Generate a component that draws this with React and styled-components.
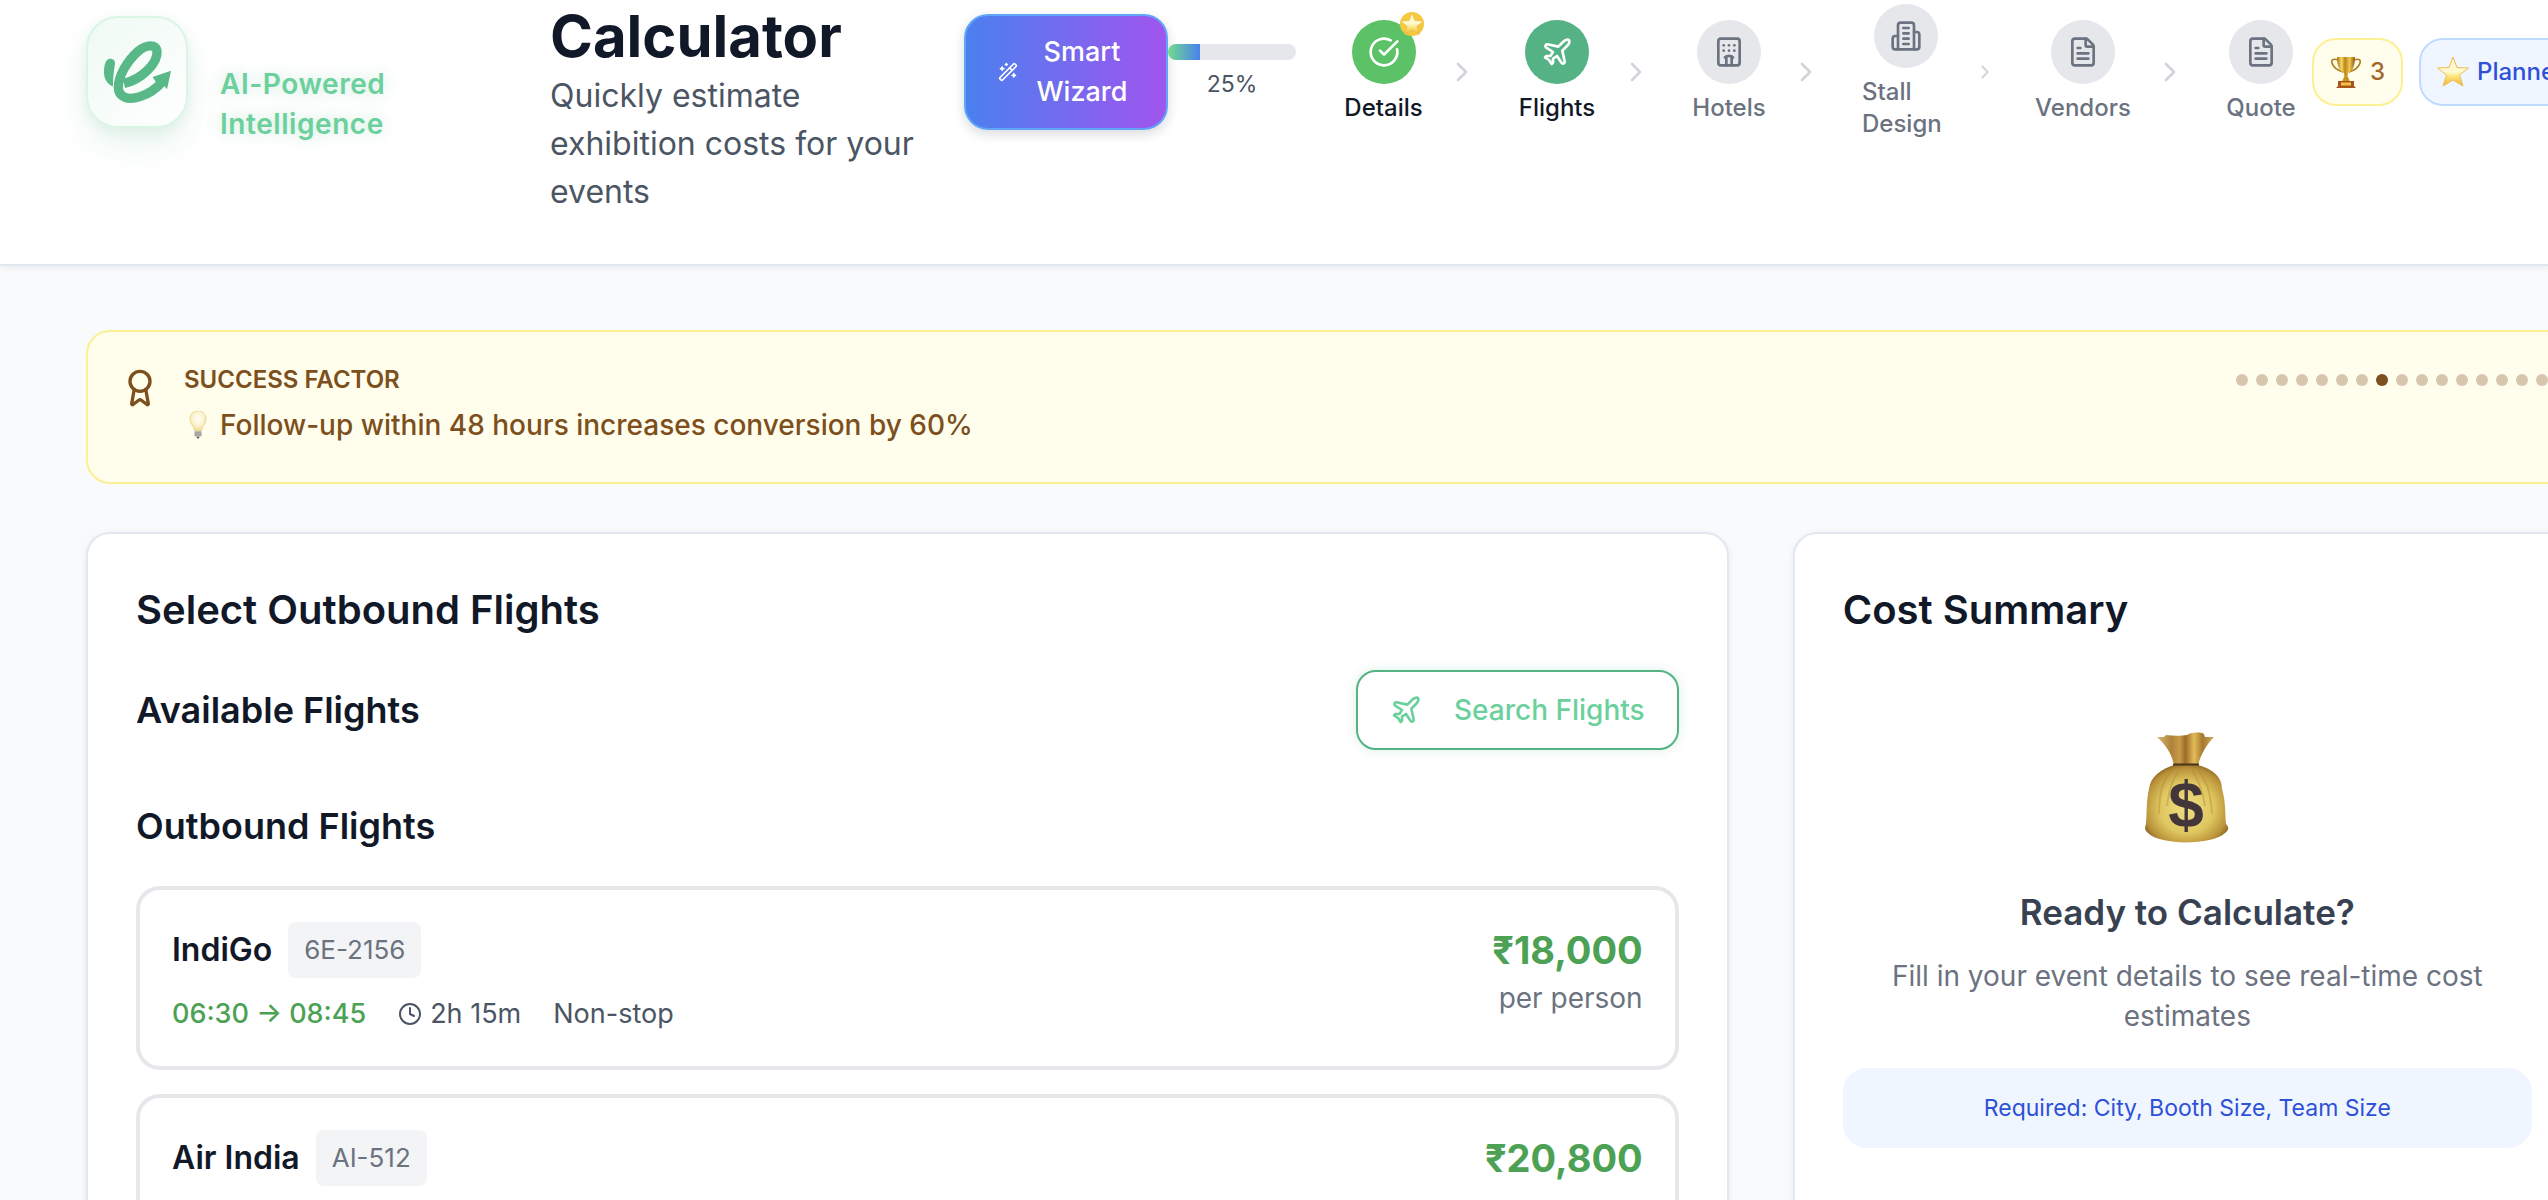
import React from "react";
import styled, { createGlobalStyle, css } from "styled-components";
import {
  Award,
  ChevronRight,
  CircleCheckBig,
  Clock,
  FileText,
  Hotel,
  Plane,
  WandSparkles,
} from "lucide-react";

const GlobalStyle = createGlobalStyle`
  *, *::before, *::after { box-sizing: border-box; }
  body { margin: 0; background: #f8fafc; }
  h1, h2, h3, h4, p, ul { margin: 0; padding: 0; }
  ul { list-style: none; }
  button { font: inherit; cursor: pointer; }
  svg { display: block; }
`;

const Page = styled.div`
  height: 100vh;
  overflow: hidden;
  background: #f8fafc;
  color: #111827;
  font-family: Inter, "Liberation Sans", sans-serif;
`;

/* ---------- header ---------- */

const Header = styled.header`
  display: flex;
  align-items: flex-start;
  padding: 0 0 48px 86px;
  background: #ffffff;
  border-bottom: 2px solid #e2e8f0;
  box-shadow: 0 2px 6px rgba(15, 23, 42, 0.06);
`;

const HeaderGroup = styled.div`
  display: flex;
  align-items: center;
  flex-shrink: 0;
  height: 144px;
  gap: ${(p) => p.$gap || 0}px;
`;

const LogoTile = styled.div`
  width: 102px;
  height: 112px;
  border: 2px solid #d9f6e5;
  border-radius: 32px;
  background: linear-gradient(135deg, #effaf4, #ffffff);
  box-shadow: 0 16px 32px rgba(84, 178, 132, 0.14), 0 4px 12px rgba(84, 178, 132, 0.1);
  overflow: hidden;
`;

const Tagline = styled.p`
  align-self: flex-end;
  width: 330px;
  padding-right: 128px;
  color: #6bd09c;
  font-size: 28px;
  font-weight: 600;
  line-height: 40px;
  letter-spacing: 0.02em;
  text-shadow: 0 0 16px rgba(84, 178, 132, 0.3);
`;

const TitleBlock = styled.div`
  flex-shrink: 0;
  width: 414px;
`;

const Title = styled.h1`
  font-size: 58px;
  font-weight: 700;
  line-height: 72px;
`;

const Subtitle = styled.p`
  padding-right: 32px;
  color: #4b5563;
  font-size: 32px;
  line-height: 48px;
`;

const WizardButton = styled.button`
  display: flex;
  align-items: center;
  justify-content: space-between;
  width: 204px;
  height: 116px;
  padding: 0 32px;
  border: 2px solid #60a5fa;
  border-radius: 24px;
  background: linear-gradient(90deg, #4b80ee, #a055ee);
  box-shadow: 0 4px 12px rgba(15, 23, 42, 0.16);
  color: #ffffff;
  font-size: 27px;
  font-weight: 500;
  line-height: 40px;
  text-align: center;
`;

const WizardLabel = styled.span`
  width: 104px;
`;

const Progress = styled.div`
  display: flex;
  flex-direction: column;
  gap: 8px;
  width: 128px;
  margin-right: 33px;
`;

const ProgressTrack = styled.div`
  height: 16px;
  border-radius: 8px;
  background: #e5e7eb;
  overflow: hidden;
`;

const ProgressFill = styled.div`
  height: 100%;
  background: linear-gradient(90deg, #6fdc8c, #4b80ee);
`;

const ProgressText = styled.span`
  color: #4b5563;
  font-size: 23px;
  line-height: 32px;
  text-align: center;
`;

const StepButton = styled.button`
  display: flex;
  flex-direction: column;
  align-items: center;
  gap: 8px;
  width: ${(p) => p.$width}px;
  padding: 0 16px;
  border: 0;
  background: none;
  color: ${(p) => (p.$reached ? "#111827" : "#6b7280")};
  font-size: 24px;
  font-weight: 500;
  line-height: 32px;
  text-align: left;
`;

const StepCircle = styled.span`
  position: relative;
  display: flex;
  align-items: center;
  justify-content: center;
  width: 64px;
  height: 64px;
  border-radius: 50%;
  ${(p) =>
    ({
      done: css`background: #5cc267; color: #ffffff;`,
      current: css`background: #54b284; color: #ffffff;`,
      todo: css`background: #e5e7eb; color: #6b7280;`,
    })[p.$state]}
`;

const StepLabel = styled.span`
  display: flex;
  justify-content: center;
  width: 100%;
`;

const StarBadge = styled.span`
  position: absolute;
  top: -8px;
  right: -8px;
  display: flex;
  align-items: center;
  justify-content: center;
  width: 24px;
  height: 24px;
  border-radius: 50%;
  background: #f5c83d;
`;

const StepArrow = styled.span`
  margin: 0 24px 0 8px;
  color: #d1d5db;
`;

const Pill = styled.div`
  display: flex;
  align-items: center;
  flex-shrink: 0;
  gap: 8px;
  height: 68px;
  padding: 0 16px;
  border: 2px solid ${(p) => (p.$tone === "gold" ? "#fbf092" : "#bfdbfe")};
  border-radius: 24px;
  background: ${(p) => (p.$tone === "gold" ? "#fffdeb" : "#eff6ff")};
  color: ${(p) => (p.$tone === "gold" ? "#a0682a" : "#2f50d8")};
  font-size: 24px;
  font-weight: 500;
  line-height: 32px;
`;

/* ---------- main ---------- */

const Main = styled.main`
  display: flex;
  flex-direction: column;
  gap: 48px;
  margin-right: -34px;
  padding: 64px 0 64px 86px;
`;

const Banner = styled.section`
  display: flex;
  align-items: flex-start;
  gap: 24px;
  padding: 32px 32px 36px;
  border: 2px solid #fbf092;
  border-radius: 24px;
  background: #fffdeb;
  color: #7c4f1d;
`;

const BannerIcon = styled.span`
  padding-top: 4px;
`;

const BannerBody = styled.div`
  display: flex;
  flex: 1;
  flex-direction: column;
  gap: 8px;
`;

const BannerLabel = styled.h2`
  font-size: 24px;
  font-weight: 600;
  line-height: 32px;
  text-transform: uppercase;
`;

const BannerText = styled.p`
  display: flex;
  align-items: center;
  gap: 8px;
  font-size: 28px;
  font-weight: 500;
  line-height: 42px;
`;

const Dots = styled.ul`
  display: flex;
  gap: 8px;
  padding-top: 10px;

  li { display: flex; }
`;

const Dot = styled.button`
  width: 12px;
  height: 12px;
  padding: 0;
  border: 0;
  border-radius: 50%;
  background: ${(p) => (p.$active ? "#7c4f1d" : "#d8c6ac")};
`;

const Columns = styled.div`
  display: grid;
  grid-template-columns: repeat(3, 1fr);
  gap: 64px;
`;

const Card = styled.section`
  grid-column: span ${(p) => p.$span || 1};
  padding: 48px;
  border: 2px solid #e2e8f0;
  border-radius: 24px;
  background: #ffffff;
  box-shadow: 0 2px 6px rgba(15, 23, 42, 0.08);
`;

const CardTitle = styled.h2`
  font-size: 40px;
  font-weight: 600;
  line-height: 56px;
`;

const SectionHead = styled.div`
  display: flex;
  align-items: center;
  justify-content: space-between;
  margin: 32px 0 48px;
`;

const SectionTitle = styled.h3`
  font-size: 36px;
  font-weight: 600;
  line-height: 56px;
`;

const SearchButton = styled.button`
  display: flex;
  align-items: center;
  gap: 32px;
  height: 80px;
  padding: 0 32px;
  border: 2px solid #54b284;
  border-radius: 20px;
  background: #ffffff;
  box-shadow: 0 0 12px rgba(84, 178, 132, 0.2);
  color: #6bd09c;
  font-size: 28px;
  font-weight: 500;
  line-height: 40px;
`;

const FlightList = styled.ul`
  display: flex;
  flex-direction: column;
  gap: 24px;
  margin-top: 32px;
`;

const FlightItem = styled.li`
  display: flex;
  justify-content: space-between;
  min-height: 184px;
  padding: 32px;
  border: 4px solid #e5e7eb;
  border-radius: 24px;
  background: #ffffff;
`;

const FlightInfo = styled.div`
  display: flex;
  flex-direction: column;
  gap: 16px;
`;

const FlightRow = styled.div`
  display: flex;
  align-items: center;
  gap: ${(p) => p.$gap}px;
  color: #4b5563;
  font-size: 27px;
  line-height: 40px;
`;

const Airline = styled.h4`
  color: #111827;
  font-size: 32px;
  font-weight: 600;
  line-height: 48px;
`;

const FlightCode = styled.span`
  padding: 8px 16px;
  border-radius: 8px;
  background: #f3f4f6;
  color: #6b7280;
  font-size: 26px;
`;

const Times = styled.span`
  color: #4ca154;
  font-weight: 500;
`;

const Duration = styled.span`
  display: flex;
  align-items: center;
  gap: 8px;
`;

const Fare = styled.div`
  color: #6b7280;
  font-size: 28px;
  line-height: 40px;
  text-align: right;
`;

const Price = styled.p`
  color: #4ca154;
  font-size: 38px;
  font-weight: 700;
  line-height: 56px;
`;

const Empty = styled.div`
  display: flex;
  flex-direction: column;
  align-items: center;
  padding-top: 94px;
  text-align: center;
`;

const EmptyTitle = styled.h3`
  margin-top: 40px;
  color: #374151;
  font-size: 35px;
  font-weight: 600;
  line-height: 56px;
`;

const EmptyText = styled.p`
  margin-top: 16px;
  padding: 0 32px;
  color: #6b7280;
  font-size: 28px;
  line-height: 40px;
`;

const Required = styled.p`
  align-self: stretch;
  margin-top: 32px;
  padding: 24px;
  border-radius: 24px;
  background: #eff6ff;
  color: #2f50d8;
  font-size: 23px;
  line-height: 32px;
`;

/* ---------- drawings ---------- */

const Logo = () => (
  <svg width="98" height="108" viewBox="84 54 294 324" fill="none" aria-hidden="true">
    <path
      d="M151 176C161 176 166 183 165 192C161 212 159 236 159 260C142 252 132 238 132 216C132 200 135 176 151 176Z"
      fill="#58b888"
    />
    <path d="M234 154C202 182 175 228 175 262" stroke="#fbfefc" strokeWidth="34" />
    <path
      d="M192 250C246 238 294 188 291 154C289 132 260 132 234 154C202 182 175 228 175 262C175 294 206 301 240 290C268 281 290 265 306 246"
      stroke="#58b888"
      strokeWidth="28"
    />
    <path d="M278 231L333 212L321 268L313 257L290 250Z" fill="#58b888" />
  </svg>
);

const Buildings = () => (
  <svg
    width="32"
    height="32"
    viewBox="0 0 24 24"
    fill="none"
    stroke="currentColor"
    strokeWidth="2"
    strokeLinecap="round"
    strokeLinejoin="round"
    aria-hidden="true"
  >
    <path d="M6 22V4a2 2 0 0 1 2-2h8a2 2 0 0 1 2 2v18Z" />
    <path d="M6 12H4a2 2 0 0 0-2 2v6a2 2 0 0 0 2 2h2" />
    <path d="M18 9h2a2 2 0 0 1 2 2v9a2 2 0 0 1-2 2h-2" />
    <path d="M10 6h4M10 10h4M10 14h4M10 18h4" />
  </svg>
);

const Star = ({ size, id }) => (
  <svg width={size} height={size} viewBox="0 0 32 32" aria-hidden="true">
    <defs>
      <linearGradient id={id} x1="0" y1="0" x2="0" y2="1">
        <stop offset="0" stopColor="#fff6c0" />
        <stop offset="0.5" stopColor="#fffbd0" />
        <stop offset="0.7" stopColor="#fbe272" />
        <stop offset="1" stopColor="#f0b030" />
      </linearGradient>
    </defs>
    <path
      d="M16 1L20 11.500L31.500 12L22.500 19L26 30L16 24L6 30L9.500 19L0.500 12L12 11.500Z"
      fill={`url(#${id})`}
      stroke="#eebb58"
      strokeWidth="1"
      strokeLinejoin="round"
    />
  </svg>
);

const Trophy = () => (
  <svg width="32" height="32" viewBox="0 0 32 32" aria-hidden="true">
    <defs>
      <linearGradient id="cup" x1="0" y1="0" x2="1" y2="0">
        <stop offset="0" stopColor="#a8740f" />
        <stop offset="0.25" stopColor="#f5d766" />
        <stop offset="0.45" stopColor="#b8841c" />
        <stop offset="0.7" stopColor="#f0c850" />
        <stop offset="1" stopColor="#8a5a0c" />
      </linearGradient>
    </defs>
    <path
      d="M8 4C3 2 1 4 2 7C3 11 7 14 13 16M24 4C29 2 31 4 30 7C29 11 25 14 19 16"
      fill="none"
      stroke="#b07d1a"
      strokeWidth="1.600"
    />
    <path d="M7 1H25C25 9 23 15 18 17L17.500 22H14.500L14 17C9 15 7 9 7 1Z" fill="url(#cup)" />
    <path d="M14 21H18L20 26H12Z" fill="#c8921c" />
    <path d="M8 25H24V30L26 32H6L8 30Z" fill="#a8541c" />
    <path d="M11 26.500H21V29.500H11Z" fill="#f0c64a" />
  </svg>
);

const Bulb = () => (
  <svg width="28" height="28" viewBox="0 0 28 28" aria-hidden="true">
    <defs>
      <radialGradient id="glass" cx="0.5" cy="0.4" r="0.6">
        <stop offset="0" stopColor="#fffefa" />
        <stop offset="0.6" stopColor="#fbf3cf" />
        <stop offset="1" stopColor="#ecd98c" />
      </radialGradient>
    </defs>
    <path
      d="M14 0C9 0 6 3.500 6 8C6 13 10 15 10.500 19.500H17.500C18 15 22 13 22 8C22 3.500 19 0 14 0Z"
      fill="url(#glass)"
      stroke="#eddc98"
      strokeWidth="1"
    />
    <path d="M10.500 20H17.500V25L15.500 26H12.500L10.500 25Z" fill="#b9b9b4" />
    <path d="M10.500 22H17.500M10.500 24H17.500" stroke="#8d8d88" strokeWidth="0.800" />
    <path d="M12.500 26H15.500L14 28Z" fill="#4a4a4a" />
  </svg>
);

const MoneyBag = () => (
  <svg width="84" height="112" viewBox="0 0 84 112" aria-hidden="true">
    <defs>
      <radialGradient id="sack" cx="0.5" cy="0.55" r="0.6">
        <stop offset="0" stopColor="#f0df82" />
        <stop offset="0.55" stopColor="#dfc660" />
        <stop offset="0.85" stopColor="#b89038" />
        <stop offset="1" stopColor="#7d5a20" />
      </radialGradient>
      <linearGradient id="neck" x1="0" y1="0" x2="1" y2="0">
        <stop offset="0" stopColor="#d8b878" />
        <stop offset="0.25" stopColor="#b0823a" />
        <stop offset="0.4" stopColor="#c89a48" />
        <stop offset="0.5" stopColor="#9a6c2c" />
        <stop offset="0.65" stopColor="#e2bc58" />
        <stop offset="0.8" stopColor="#a87830" />
        <stop offset="1" stopColor="#d0ac60" />
      </linearGradient>
    </defs>
    <path
      d="M12 5L19 5L21 3C28 4 36 4 42 3C47 0 56 0 59 2L60 5L69 5C62 12 56 22 53 33H29C27 22 20 12 12 5Z"
      fill="url(#neck)"
    />
    <path
      d="M29 33H53C68 37 77 45 77 57C81 70 80 84 81 92C85 96 83 99 80 101C68 113 16 114 3 101C-1 98 0 95 1 92C2 82 1 70 4 57C5 45 16 37 29 33Z"
      fill="url(#sack)"
    />
    <path
      d="M28 38C18 46 14 62 14 82M34 38C26 50 24 60 22 74M52 38C61 46 66 62 67 82M47 38C55 50 58 60 60 74"
      stroke="#b08a38"
      strokeWidth="2"
      fill="none"
      opacity="0.4"
    />
    <path d="M28 32.500H54" stroke="#4a3518" strokeWidth="2" />
    <text x="41" y="95" textAnchor="middle" fill="#43363a" fontFamily="Liberation Sans, sans-serif" fontSize="64" fontWeight="700">
      $
    </text>
  </svg>
);

/* ---------- data ---------- */

const steps = [
  { label: "Details", icon: <CircleCheckBig size={32} />, state: "done", width: 109, starred: true },
  { label: "Flights", icon: <Plane size={32} />, state: "current", width: 110 },
  { label: "Hotels", icon: <Hotel size={32} />, state: "todo", width: 106 },
  { label: "Stall Design", icon: <Buildings />, state: "todo", width: 120, arrow: 22 },
  { label: "Vendors", icon: <FileText size={32} />, state: "todo", width: 126 },
  { label: "Quote", icon: <FileText size={32} />, state: "todo", width: 102 },
];

const flights = [
  { airline: "IndiGo", code: "6E-2156", price: "₹18,000", times: "06:30 → 08:45", duration: "2h 15m", stops: "Non-stop", unit: "per person" },
  { airline: "Air India", code: "AI-512", price: "₹20,800" },
];

const progress = 25;
const tipCount = 16;
const activeTip = 7;

export default function App() {
  return (
    <Page>
      <GlobalStyle />
      <Header>
        <HeaderGroup $gap={32}>
          <LogoTile>
            <Logo />
          </LogoTile>
          <Tagline>AI-Powered Intelligence</Tagline>
        </HeaderGroup>
        <TitleBlock>
          <Title>Calculator</Title>
          <Subtitle>Quickly estimate exhibition costs for your events</Subtitle>
        </TitleBlock>
        <HeaderGroup>
          <WizardButton type="button">
            <WandSparkles size={20} />
            <WizardLabel>Smart Wizard</WizardLabel>
          </WizardButton>
          <Progress>
            <ProgressTrack role="progressbar" aria-label="Progress" aria-valuenow={progress} aria-valuemin={0} aria-valuemax={100}>
              <ProgressFill style={{ width: `${progress}%` }} />
            </ProgressTrack>
            <ProgressText>{progress}%</ProgressText>
          </Progress>
          {steps.map((step, i) => (
            <React.Fragment key={step.label}>
              <StepButton type="button" $width={step.width} $reached={step.state !== "todo"}>
                <StepCircle $state={step.state}>
                  {step.icon}
                  {step.starred && (
                    <StarBadge>
                      <Star size={24} id="badge-star" />
                    </StarBadge>
                  )}
                </StepCircle>
                <StepLabel>{step.label}</StepLabel>
              </StepButton>
              {i < steps.length - 1 && (
                <StepArrow>
                  <ChevronRight size={step.arrow || 32} />
                </StepArrow>
              )}
            </React.Fragment>
          ))}
        </HeaderGroup>
        <HeaderGroup $gap={16}>
          <Pill $tone="gold">
            <Trophy />
            <span>3</span>
          </Pill>
          <Pill $tone="blue">
            <Star size={32} id="level-star" />
            <span>Planner</span>
          </Pill>
        </HeaderGroup>
      </Header>

      <Main>
        <Banner>
          <BannerIcon>
            <Award size={40} />
          </BannerIcon>
          <BannerBody>
            <BannerLabel>Success Factor</BannerLabel>
            <BannerText>
              <Bulb />
              Follow-up within 48 hours increases conversion by 60%
            </BannerText>
          </BannerBody>
          <Dots>
            {Array.from({ length: tipCount }, (_, i) => (
              <li key={i}>
                <Dot type="button" aria-label={`Tip ${i + 1}`} $active={i === activeTip} />
              </li>
            ))}
          </Dots>
        </Banner>

        <Columns>
          <Card $span={2}>
            <CardTitle>Select Outbound Flights</CardTitle>
            <SectionHead>
              <SectionTitle>Available Flights</SectionTitle>
              <SearchButton type="button">
                <Plane size={32} />
                Search Flights
              </SearchButton>
            </SectionHead>
            <SectionTitle>Outbound Flights</SectionTitle>
            <FlightList>
              {flights.map((flight) => (
                <FlightItem key={flight.code}>
                  <FlightInfo>
                    <FlightRow $gap={16}>
                      <Airline>{flight.airline}</Airline>
                      <FlightCode>{flight.code}</FlightCode>
                    </FlightRow>
                    {flight.times && (
                      <FlightRow $gap={32}>
                        <Times>{flight.times}</Times>
                        <Duration>
                          <Clock size={24} />
                          {flight.duration}
                        </Duration>
                        <span>{flight.stops}</span>
                      </FlightRow>
                    )}
                  </FlightInfo>
                  <Fare>
                    <Price>{flight.price}</Price>
                    {flight.unit}
                  </Fare>
                </FlightItem>
              ))}
            </FlightList>
          </Card>

          <Card>
            <CardTitle>Cost Summary</CardTitle>
            <Empty>
              <MoneyBag />
              <EmptyTitle>Ready to Calculate?</EmptyTitle>
              <EmptyText>Fill in your event details to see real-time cost estimates</EmptyText>
              <Required>Required: City, Booth Size, Team Size</Required>
            </Empty>
          </Card>
        </Columns>
      </Main>
    </Page>
  );
}
